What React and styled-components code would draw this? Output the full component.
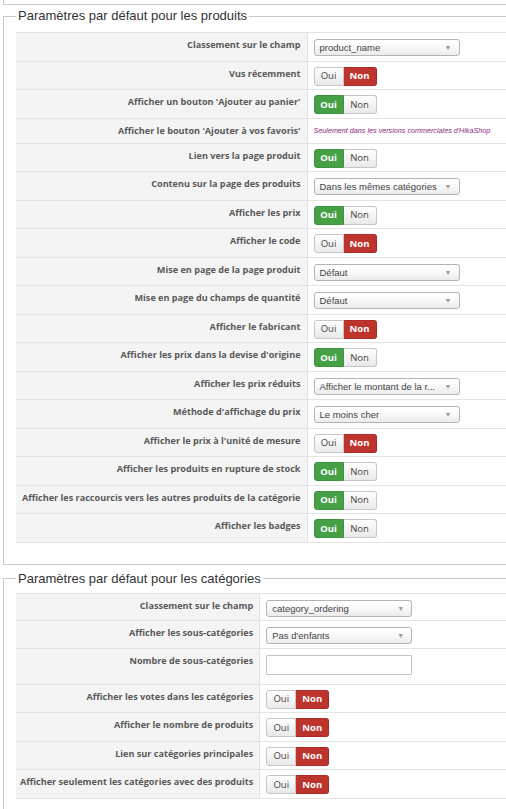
import React from "react";
import styled, { createGlobalStyle } from "styled-components";

const GlobalStyle = createGlobalStyle`
  html, body {
    margin: 0;
    padding: 0;
    background: #ffffff;
    overflow: hidden;
  }
  body {
    font-family: "Liberation Sans", Arial, sans-serif;
    color: #333;
  }
`;

const Page = styled.div`
  padding-left: 3px;
`;

const PrevFieldsetEnd = styled.div`
  height: 4px;
  border: 1px solid #c9c9c9;
  border-top: none;
  border-right: none;
  margin-bottom: 2px;
`;

const Fieldset = styled.fieldset`
  margin: 0 0 ${(p) => p.$gap || 0}px 0;
  padding: ${(p) => p.$top}px 0 ${(p) => p.$bottom || 0}px 12px;
  border: 1px solid #c9c9c9;
  border-right: none;
  min-width: 0;
`;

const Legend = styled.legend`
  padding: 0 2px;
  font-size: 13px;
  line-height: 18px;
  color: #333;
`;

const Table = styled.table`
  border-collapse: collapse;
  width: 100%;
  border-top: 1px solid #e3e3e3;
`;

const Row = styled.tr`
  height: ${(p) => p.$h}px;
  border-bottom: 1px solid #e3e3e3;
`;

const Key = styled.td`
  width: ${(p) => p.$w}px;
  box-sizing: border-box;
  background: #f4f4f4;
  border-right: 1px solid #e3e3e3;
  text-align: right;
  vertical-align: top;
  padding: 6px 6px 0 4px;
  font-family: "Open Sans", "Liberation Sans", sans-serif;
  font-weight: bold;
  font-size: 9.1px;
  line-height: 12px;
  color: #595959;
  white-space: nowrap;
`;

const Value = styled.td`
  vertical-align: top;
  padding: ${(p) => p.$pt ?? 5}px 0 0 6px;
  line-height: 12px;
`;

const SelectBox = styled.div`
  position: relative;
  width: 146px;
  height: 17px;
  box-sizing: border-box;
  border: 1px solid #b4b4b4;
  border-radius: 3px;
  background: linear-gradient(#ffffff 20%, #ececec);
  font-family: "Liberation Sans", Arial, sans-serif;
  font-size: 9.5px;
  line-height: 15px;
  color: #444;
  padding-left: 5px;
  margin-top: 1px;
`;

const Arrow = styled.span`
  position: absolute;
  right: 7px;
  top: 0;
  font-size: 7px;
  color: #999;
`;

const TextInput = styled.div`
  width: 146px;
  height: 20px;
  box-sizing: border-box;
  border: 1px solid #c4c4c4;
  border-radius: 1px;
  background: #fff;
  margin-top: 1px;
`;

const Note = styled.span`
  display: block;
  padding-top: 2px;
  font-family: "Liberation Sans", Arial, sans-serif;
  font-style: italic;
  font-size: 7.2px;
  color: #8a2a7e;
`;

const Group = styled.div`
  display: flex;
  height: 19px;
`;

const Toggle = styled.span`
  display: flex;
  align-items: center;
  justify-content: center;
  width: ${(p) => p.$w}px;
  box-sizing: border-box;
  font-family: "Open Sans", "Liberation Sans", sans-serif;
  font-size: 9.5px;
  border: 1px solid #c6c6c6;
  ${(p) => (p.$first ? "border-radius: 3px 0 0 3px;" : "border-radius: 0 3px 3px 0; border-left: none;")}
  color: #444;
  background: linear-gradient(#ffffff, #e9e9e9);
  ${(p) =>
    p.$on === "yes" &&
    `background: #46a046; border-color: #3f923f; color: #fff; font-weight: bold;`}
  ${(p) =>
    p.$on === "no" &&
    `background: #bd342c; border-color: #ac2d26; color: #fff; font-weight: bold;`}
`;

function YesNo({ value }) {
  return (
    <Group>
      <Toggle $first $w={30} $on={value ? "yes" : undefined}>
        Oui
      </Toggle>
      <Toggle $w={33} $on={value ? undefined : "no"}>
        Non
      </Toggle>
    </Group>
  );
}

function Select({ text }) {
  return (
    <SelectBox>
      {text}
      <Arrow>▼</Arrow>
    </SelectBox>
  );
}

const products = [
  ["Classement sur le champ", { select: "product_name" }],
  ["Vus récemment", { bool: false }],
  ["Afficher un bouton 'Ajouter au panier'", { bool: true }],
  ["Afficher le bouton 'Ajouter à vos favoris'", { note: "Seulement dans les versions commerciales d'HikaShop" }],
  ["Lien vers la page produit", { bool: true }],
  ["Contenu sur la page des produits", { select: "Dans les mêmes catégories" }],
  ["Afficher les prix", { bool: true }],
  ["Afficher le code", { bool: false }],
  ["Mise en page de la page produit", { select: "Défaut" }],
  ["Mise en page du champs de quantité", { select: "Défaut" }],
  ["Afficher le fabricant", { bool: false }],
  ["Afficher les prix dans la devise d'origine", { bool: true }],
  ["Afficher les prix réduits", { select: "Afficher le montant de la r..." }],
  ["Méthode d'affichage du prix", { select: "Le moins cher" }],
  ["Afficher le prix à l'unité de mesure", { bool: false }],
  ["Afficher les produits en rupture de stock", { bool: true }],
  ["Afficher les raccourcis vers les autres produits de la catégorie", { bool: true }],
  ["Afficher les badges", { bool: true }],
];

const categories = [
  ["Classement sur le champ", { select: "category_ordering" }, 27],
  ["Afficher les sous-catégories", { select: "Pas d'enfants" }, 28.5],
  ["Nombre de sous-catégories", { input: true }, 35.5],
  ["Afficher les votes dans les catégories", { bool: false }, 28.5],
  ["Afficher le nombre de produits", { bool: false }, 28.5],
  ["Lien sur catégories principales", { bool: false }, 28.5],
  ["Afficher seulement les catégories avec des produits", { bool: false }, 28.5],
];

function Field({ f }) {
  if (f.select) return <Select text={f.select} />;
  if (f.note) return <Note>{f.note}</Note>;
  if (f.input) return <TextInput />;
  return <YesNo value={f.bool} />;
}

function SettingsTable({ rows, keyWidth }) {
  return (
    <Table>
      <tbody>
        {rows.map(([label, f, h]) => (
          <Row key={label} $h={h || (f.note ? 25 : 28.5)}>
            <Key $w={keyWidth}>{label}</Key>
            <Value $pt={f.note ? 4 : 5}>
              <Field f={f} />
            </Value>
          </Row>
        ))}
      </tbody>
    </Table>
  );
}

export default function App() {
  return (
    <>
      <GlobalStyle />
      <Page>
        <PrevFieldsetEnd />
        <Fieldset $top={7} $bottom={21} $gap={5}>
          <Legend>Paramètres par défaut pour les produits</Legend>
          <SettingsTable rows={products} keyWidth={291} />
        </Fieldset>
        <Fieldset $top={5} $bottom={20}>
          <Legend>Paramètres par défaut pour les catégories</Legend>
          <SettingsTable rows={categories} keyWidth={242} />
        </Fieldset>
      </Page>
    </>
  );
}
